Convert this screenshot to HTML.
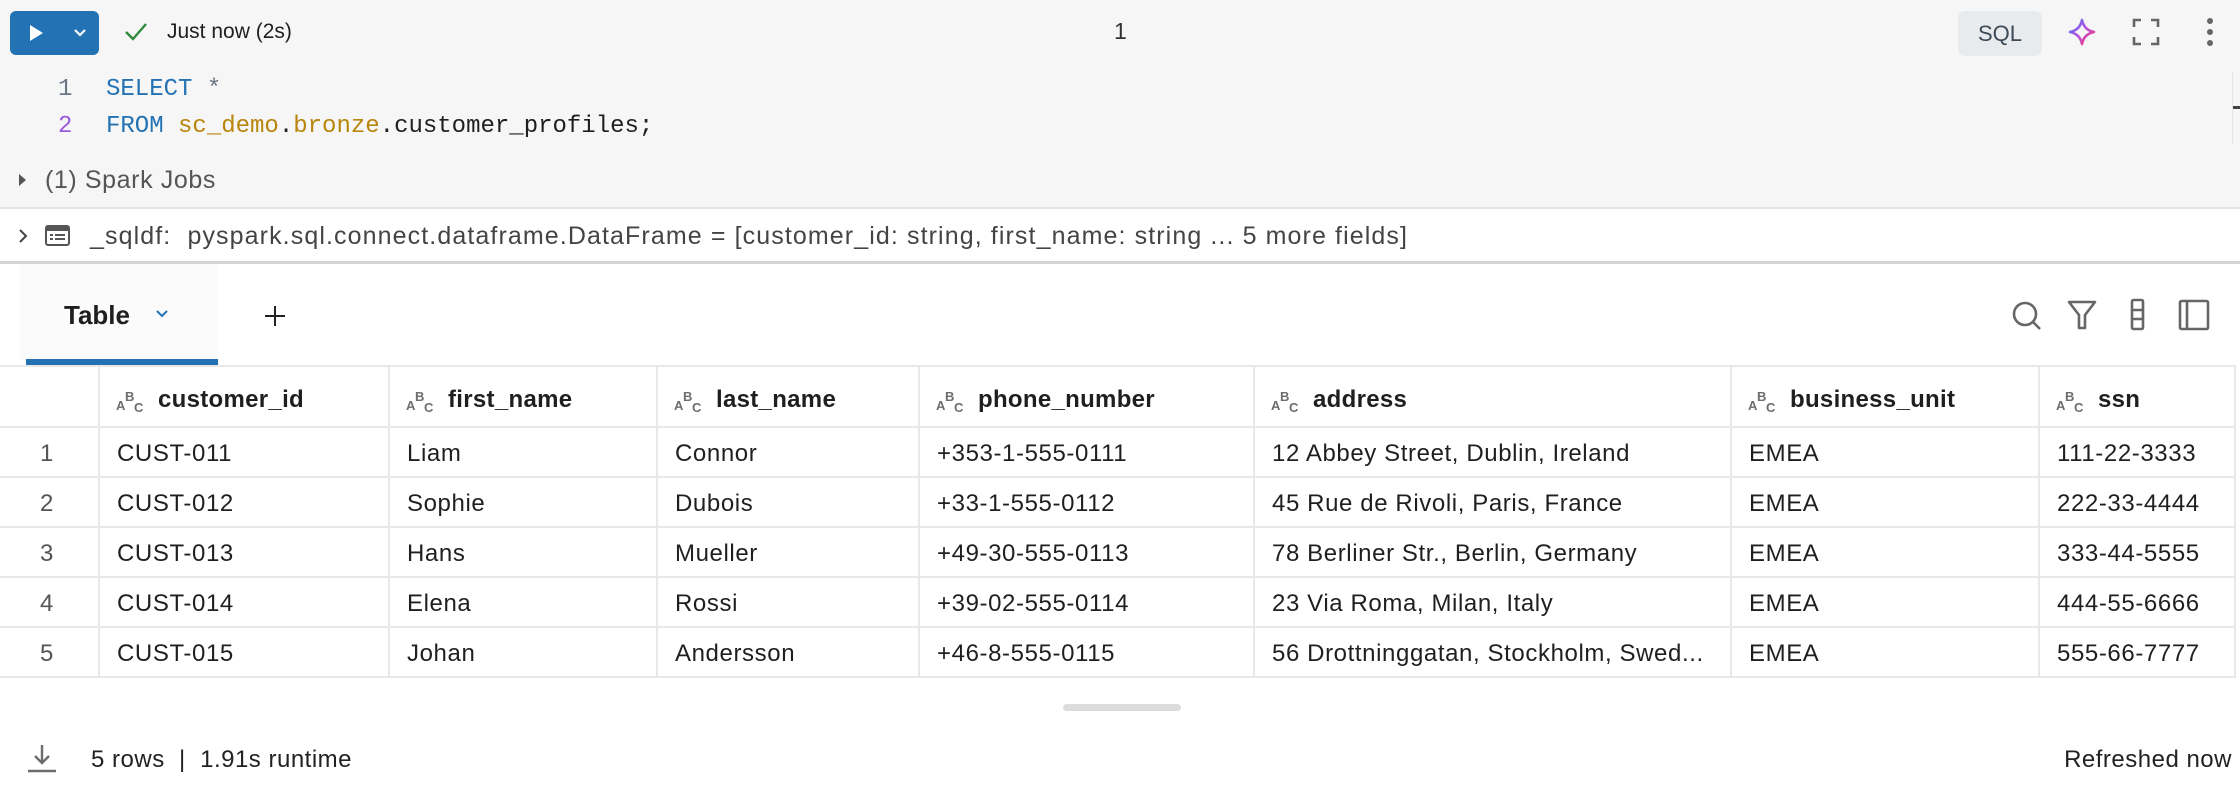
<!DOCTYPE html>
<html><head><meta charset="utf-8"><style>
*{margin:0;padding:0;box-sizing:border-box}
body{width:2240px;height:796px;overflow:hidden;background:#fff;font-family:"Liberation Sans",sans-serif;color:#1f1f1f;position:relative}
.a{position:absolute;white-space:nowrap}
.top{position:absolute;left:0;top:0;width:2240px;height:209px;background:#f6f6f6;border-bottom:2px solid #e3e3e3}
.mono{font-family:"Liberation Mono",monospace;font-size:24px}
.hl{position:absolute;height:2px;background:#e8e8e8;left:0;width:2236px}
.vl{position:absolute;width:2px;background:#e8e8e8;top:366px;height:311px}
.hd{position:absolute;top:369px;height:61px;line-height:61px;font-size:24px;letter-spacing:0.3px;font-weight:bold;color:#1f1f1f;white-space:nowrap}
.ic{font-size:13px;font-weight:bold;color:#6d6d6d;position:relative;display:inline-block;width:36px;height:30px;vertical-align:middle;margin-right:6px;line-height:normal;letter-spacing:0}
.ic b{position:absolute;font-size:13px}
.c{position:absolute;font-size:24px;letter-spacing:0.6px;color:#1f1f1f;white-space:nowrap}
</style></head><body>
<div class="top"></div>
<div class="a" style="left:10px;top:11px;width:89px;height:44px;background:#2272b4;border-radius:6px"></div>
<svg class="a" style="left:26px;top:23px" width="20" height="20"><path d="M4 2 L17 10 L4 18 Z" fill="#fff"/></svg>
<svg class="a" style="left:72px;top:25px" width="16" height="16"><path d="M3 5 L8 10 L13 5" stroke="#fff" stroke-width="2.2" fill="none"/></svg>
<svg class="a" style="left:123px;top:20px" width="26" height="24"><path d="M3 12 L10 19 L23 4" stroke="#2f8a3e" stroke-width="2.4" fill="none"/></svg>
<div class="a" style="left:167px;top:20px;font-size:21px;color:#1f1f1f">Just now (2s)</div>
<div class="a" style="left:1114px;top:18px;font-size:23px;color:#333">1</div>
<div class="a" style="left:1958px;top:11px;width:84px;height:45px;background:#e8ebee;border-radius:7px;font-size:22px;color:#3d4a57;text-align:center;line-height:45px">SQL</div>
<svg class="a" style="left:2067px;top:17px" width="30" height="30"><defs><linearGradient id="g" x1="0" y1="0" x2="1" y2="1"><stop offset="0" stop-color="#4a7cf5"/><stop offset=".5" stop-color="#b84ee0"/><stop offset="1" stop-color="#ff3a5c"/></linearGradient></defs><path d="M15 3 Q17 13 27 15 Q17 17 15 27 Q13 17 3 15 Q13 13 15 3 Z" stroke="url(#g)" stroke-width="2.6" fill="none" stroke-linejoin="round"/></svg>
<svg class="a" style="left:2131px;top:17px" width="30" height="30"><path d="M3 10V3H10M20 3H27V10M27 20V27H20M10 27H3V20" stroke="#666" stroke-width="2.6" fill="none"/></svg>
<svg class="a" style="left:2202px;top:17px" width="16" height="30"><circle cx="8" cy="4" r="3" fill="#666"/><circle cx="8" cy="15" r="3" fill="#666"/><circle cx="8" cy="26" r="3" fill="#666"/></svg>
<div class="a" style="left:2232px;top:72px;width:1px;height:72px;background:#e6e6e6"></div>
<div class="a" style="left:2233px;top:106px;width:7px;height:3px;background:#444"></div>

<div class="a mono" style="left:58px;top:76px;color:#6b7785">1</div>
<div class="a mono" style="left:58px;top:113px;color:#9a5ad8">2</div>
<div class="a mono" style="left:106px;top:76px"><span style="color:#2272b4">SELECT</span> <span style="color:#6b7785">*</span></div>
<div class="a mono" style="left:106px;top:113px"><span style="color:#2272b4">FROM</span> <span style="color:#b8860b">sc_demo</span>.<span style="color:#b8860b">bronze</span>.customer_profiles;</div>

<svg class="a" style="left:16px;top:172px" width="12" height="16"><path d="M3 2 L10 8 L3 14 Z" fill="#555"/></svg>
<div class="a" style="left:45px;top:166px;font-size:25px;letter-spacing:0.6px;color:#555">(1) Spark Jobs</div>

<svg class="a" style="left:16px;top:227px" width="14" height="18"><path d="M4 3 L10 9 L4 15" stroke="#444" stroke-width="2" fill="none"/></svg>
<svg class="a" style="left:44px;top:224px" width="28" height="24"><rect x="2" y="2" width="23" height="19" rx="2" fill="none" stroke="#555" stroke-width="2"/><rect x="2" y="2" width="23" height="5" fill="#555"/><path d="M6 11h3M11 11h10M6 15h3M11 15h10" stroke="#555" stroke-width="2"/></svg>
<div class="a" style="left:90px;top:222px;font-size:25px;letter-spacing:1.1px;color:#444">_sqldf:&nbsp;&nbsp;pyspark.sql.connect.dataframe.DataFrame = [customer_id: string, first_name: string ... 5 more fields]</div>
<div class="a" style="left:0;top:261px;width:2240px;height:3px;background:#d4d4d4"></div>

<div class="a" style="left:20px;top:264px;width:198px;height:96px;background:#fbfbfb"></div>
<div class="a" style="left:26px;top:359px;width:192px;height:7px;background:#2272b4"></div>
<div class="a" style="left:64px;top:300px;font-size:26px;font-weight:bold;color:#1f1f1f">Table</div>
<svg class="a" style="left:154px;top:307px" width="16" height="14"><path d="M3 4 L8 9 L13 4" stroke="#2272b4" stroke-width="2" fill="none"/></svg>
<svg class="a" style="left:262px;top:303px" width="26" height="26"><path d="M13 3V23M3 13H23" stroke="#222" stroke-width="2"/></svg>
<svg class="a" style="left:2010px;top:299px" width="36" height="36"><circle cx="15" cy="15" r="11" stroke="#666" stroke-width="2.6" fill="none"/><path d="M23 23 L30 30" stroke="#666" stroke-width="2.6"/></svg>
<svg class="a" style="left:2066px;top:299px" width="32" height="32"><path d="M3 3H29L19 16V29H13V16Z" stroke="#666" stroke-width="2.6" fill="none" stroke-linejoin="round"/></svg>
<svg class="a" style="left:2130px;top:298px" width="16" height="34"><rect x="2" y="2" width="11" height="29" rx="1.5" stroke="#666" stroke-width="2.6" fill="none"/><path d="M2 12H13M2 21H13" stroke="#666" stroke-width="2.6"/></svg>
<svg class="a" style="left:2178px;top:299px" width="34" height="32"><rect x="2" y="2" width="28" height="28" rx="1.5" stroke="#666" stroke-width="2.6" fill="none"/><path d="M9 2V30" stroke="#666" stroke-width="2.6"/></svg>

<div class="hl" style="top:365px"></div>
<div class="hl" style="top:426px"></div>
<div class="hl" style="top:476px"></div>
<div class="hl" style="top:526px"></div>
<div class="hl" style="top:576px"></div>
<div class="hl" style="top:626px"></div>
<div class="hl" style="top:676px"></div>
<div class="vl" style="left:98px"></div>
<div class="vl" style="left:388px"></div>
<div class="vl" style="left:656px"></div>
<div class="vl" style="left:918px"></div>
<div class="vl" style="left:1253px"></div>
<div class="vl" style="left:1730px"></div>
<div class="vl" style="left:2038px"></div>
<div class="vl" style="left:2234px"></div>

<div class="hd" style="left:116px"><span class="ic"><b style="left:0;top:12px">A</b><b style="left:9px;top:3px">B</b><b style="left:18px;top:14px">C</b></span>customer_id</div>
<div class="hd" style="left:406px"><span class="ic"><b style="left:0;top:12px">A</b><b style="left:9px;top:3px">B</b><b style="left:18px;top:14px">C</b></span>first_name</div>
<div class="hd" style="left:674px"><span class="ic"><b style="left:0;top:12px">A</b><b style="left:9px;top:3px">B</b><b style="left:18px;top:14px">C</b></span>last_name</div>
<div class="hd" style="left:936px"><span class="ic"><b style="left:0;top:12px">A</b><b style="left:9px;top:3px">B</b><b style="left:18px;top:14px">C</b></span>phone_number</div>
<div class="hd" style="left:1271px"><span class="ic"><b style="left:0;top:12px">A</b><b style="left:9px;top:3px">B</b><b style="left:18px;top:14px">C</b></span>address</div>
<div class="hd" style="left:1748px"><span class="ic"><b style="left:0;top:12px">A</b><b style="left:9px;top:3px">B</b><b style="left:18px;top:14px">C</b></span>business_unit</div>
<div class="hd" style="left:2056px"><span class="ic"><b style="left:0;top:12px">A</b><b style="left:9px;top:3px">B</b><b style="left:18px;top:14px">C</b></span>ssn</div>

<div class="c" style="left:40px;top:440px;color:#555">1</div>
<div class="c" style="left:117px;top:440px">CUST-011</div><div class="c" style="left:407px;top:440px">Liam</div><div class="c" style="left:675px;top:440px">Connor</div><div class="c" style="left:937px;top:440px">+353-1-555-0111</div><div class="c" style="left:1272px;top:440px">12 Abbey Street, Dublin, Ireland</div><div class="c" style="left:1749px;top:440px">EMEA</div><div class="c" style="left:2057px;top:440px">111-22-3333</div>
<div class="c" style="left:40px;top:490px;color:#555">2</div>
<div class="c" style="left:117px;top:490px">CUST-012</div><div class="c" style="left:407px;top:490px">Sophie</div><div class="c" style="left:675px;top:490px">Dubois</div><div class="c" style="left:937px;top:490px">+33-1-555-0112</div><div class="c" style="left:1272px;top:490px">45 Rue de Rivoli, Paris, France</div><div class="c" style="left:1749px;top:490px">EMEA</div><div class="c" style="left:2057px;top:490px">222-33-4444</div>
<div class="c" style="left:40px;top:540px;color:#555">3</div>
<div class="c" style="left:117px;top:540px">CUST-013</div><div class="c" style="left:407px;top:540px">Hans</div><div class="c" style="left:675px;top:540px">Mueller</div><div class="c" style="left:937px;top:540px">+49-30-555-0113</div><div class="c" style="left:1272px;top:540px">78 Berliner Str., Berlin, Germany</div><div class="c" style="left:1749px;top:540px">EMEA</div><div class="c" style="left:2057px;top:540px">333-44-5555</div>
<div class="c" style="left:40px;top:590px;color:#555">4</div>
<div class="c" style="left:117px;top:590px">CUST-014</div><div class="c" style="left:407px;top:590px">Elena</div><div class="c" style="left:675px;top:590px">Rossi</div><div class="c" style="left:937px;top:590px">+39-02-555-0114</div><div class="c" style="left:1272px;top:590px">23 Via Roma, Milan, Italy</div><div class="c" style="left:1749px;top:590px">EMEA</div><div class="c" style="left:2057px;top:590px">444-55-6666</div>
<div class="c" style="left:40px;top:640px;color:#555">5</div>
<div class="c" style="left:117px;top:640px">CUST-015</div><div class="c" style="left:407px;top:640px">Johan</div><div class="c" style="left:675px;top:640px">Andersson</div><div class="c" style="left:937px;top:640px">+46-8-555-0115</div><div class="c" style="left:1272px;top:640px;width:460px;overflow:hidden">56 Drottninggatan, Stockholm, Swed...</div><div class="c" style="left:1749px;top:640px">EMEA</div><div class="c" style="left:2057px;top:640px">555-66-7777</div>

<div class="a" style="left:1063px;top:704px;width:118px;height:7px;background:#dcdcdc;border-radius:4px"></div>

<svg class="a" style="left:27px;top:742px" width="30" height="32"><path d="M15 3V21M8 14L15 21L22 14" stroke="#6d6d6d" stroke-width="2.4" fill="none"/><path d="M1 29H29" stroke="#6d6d6d" stroke-width="2.6"/></svg>
<div class="a" style="left:91px;top:746px;font-size:24px;letter-spacing:0.5px;color:#222">5 rows&nbsp;&nbsp;|&nbsp;&nbsp;1.91s runtime</div>
<div class="a" style="right:8px;top:746px;font-size:24px;letter-spacing:0.5px;color:#222">Refreshed now</div>
</body></html>
